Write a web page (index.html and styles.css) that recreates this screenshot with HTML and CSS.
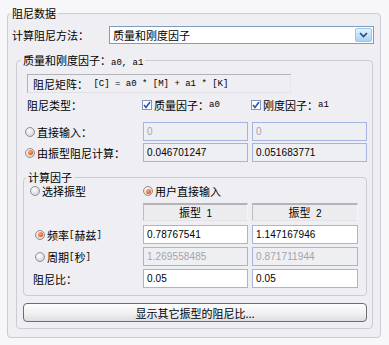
FILE: index.html
```html
<!DOCTYPE html>
<html>
<head>
<meta charset="utf-8">
<link rel="stylesheet" href="styles.css">
</head>
<body>
<fieldset class="grp outer">
  <legend>阻尼数据</legend>
  <div class="method-row">
    <span class="method-lbl">计算阻尼方法：</span>
    <div class="combo">
      <span class="combo-text">质量和刚度因子</span>
      <span class="combo-btn"><svg width="9" height="6" viewBox="0 0 9 6"><polyline points="1,1 4.5,4.5 8,1" fill="none" stroke="#29487a" stroke-width="1.6"/></svg></span>
    </div>
  </div>
  <fieldset class="grp inner">
    <legend>质量和刚度因子：<span class="mono">a0, a1</span></legend>
    <div class="formula">阻尼矩阵：<span class="mono">&nbsp;[C] = a0 * [M] + a1 * [K]</span></div>
    <div class="row3 chk-row">
      <span class="lbl">阻尼类型：</span>
      <span class="chk"><span class="box"><svg width="8" height="8" viewBox="0 0 8 8"><polyline points="1,4 3,6.5 7,1" fill="none" stroke="#2450b8" stroke-width="1.5"/></svg></span>质量因子：<span class="mono">a0</span></span>
      <span class="chk"><span class="box"><svg width="8" height="8" viewBox="0 0 8 8"><polyline points="1,4 3,6.5 7,1" fill="none" stroke="#2450b8" stroke-width="1.5"/></svg></span>刚度因子：<span class="mono">a1</span></span>
    </div>
    <div class="row3 in-row first">
      <span class="rlbl"><span class="rb"></span>直接输入：</span>
      <div class="inp dis">0</div>
      <div class="inp dis">0</div>
    </div>
    <div class="row3 in-row">
      <span class="rlbl"><span class="rb on"></span>由振型阻尼计算：</span>
      <div class="inp ro">0.046701247</div>
      <div class="inp ro">0.051683771</div>
    </div>
    <fieldset class="grp factor">
      <legend>计算因子</legend>
      <div class="rowf sel-row">
        <span class="rlbl"><span class="rb"></span>选择振型</span>
        <span class="rlbl span2"><span class="rb on"></span>用户直接输入</span>
      </div>
      <div class="rowf hdr-row">
        <span></span>
        <div class="hdr">振型<span class="num">&nbsp; 1</span></div>
        <div class="hdr">振型<span class="num">&nbsp; 2</span></div>
      </div>
      <div class="rowf frow">
        <span class="rlbl ind5"><span class="rb on"></span>频率<span class="mono">[</span>赫兹<span class="mono">]</span></span>
        <div class="inp">0.78767541</div>
        <div class="inp">1.147167946</div>
      </div>
      <div class="rowf frow">
        <span class="rlbl ind5"><span class="rb"></span>周期<span class="mono">[</span>秒<span class="mono">]</span></span>
        <div class="inp dis">1.269558485</div>
        <div class="inp dis">0.871711944</div>
      </div>
      <div class="rowf frow">
        <span class="lbl ind3">阻尼比：</span>
        <div class="inp">0.05</div>
        <div class="inp">0.05</div>
      </div>
    </fieldset>
    <button class="btn">显示其它振型的阻尼比...</button>
  </fieldset>
</fieldset>
</body>
</html>
```
FILE: styles.css
```css
* { box-sizing: border-box; }
html, body { margin: 0; padding: 0; }
body {
  width: 389px;
  height: 345px;
  overflow: hidden;
  background: #f7f7f9;
  font-family: "Noto Sans CJK SC", sans-serif;
  font-size: 11px;
  line-height: 14px;
  color: #000;
  text-spacing-trim: space-all;
}
.mono { font-family: "Liberation Mono", monospace; font-size: 9px; }
.num { font-family: "Liberation Sans", sans-serif; font-size: 10px; }

.grp {
  border: 1px solid #cbccd4;
  border-radius: 4px;
  min-width: 0;
  margin: 0;
}
.grp > legend {
  padding: 0 2px;
  height: 14px;
  line-height: 14px;
  white-space: nowrap;
}

.outer { margin: 6px 8px 0 7px; padding: 6px 6px 8px 4px; background: #efeff3; }
.outer > legend { margin-left: -2px; }

.method-row { display: flex; align-items: center; height: 18px; }
.method-lbl { width: 97px; flex: none; }
.combo {
  flex: 1;
  height: 18px;
  border: 1px solid #7f9db9;
  background: #fff;
  display: flex;
  align-items: center;
  padding-left: 3px;
}
.combo-btn {
  margin-left: auto;
  margin-right: 1px;
  width: 17px;
  height: 14px;
  border: 1px solid #9cc6ea;
  border-radius: 2px;
  background: linear-gradient(#e2f2fe, #a8d3f4);
  display: flex;
  align-items: center;
  justify-content: center;
}

.inner { margin: 9px 1px 0 4px; padding: 7px 5px 6px 10px; }
.inner > legend { margin-left: -6px; }

.formula {
  width: 264px;
  height: 19px;
  border: 1px solid;
  border-color: #b2b2ba #e6e6ec #e0e0e6 #b2b2ba;
  padding-left: 5px;
  display: flex;
  align-items: center;
}

.row3 {
  display: grid;
  grid-template-columns: 112px 105px 115px;
  column-gap: 4px;
  align-items: center;
}
.chk-row { height: 18px; margin-top: 3px; }
.in-row { height: 19px; margin-top: 2px; }
.in-row.first { margin-top: 8px; }

.chk { display: flex; align-items: center; margin-left: -1px; }
.box {
  width: 10px;
  height: 10px;
  border: 1px solid #8595b8;
  background: #fff;
  margin-right: 2px;
  display: flex;
  align-items: center;
  justify-content: center;
}

.rlbl { display: flex; align-items: center; margin-left: -2px; white-space: nowrap; }
.rb {
  width: 10px;
  height: 10px;
  border-radius: 50%;
  border: 1px solid #8e8e9a;
  background: radial-gradient(circle at 40% 35%, #ffffff, #d2d2da 80%);
  margin-right: 2px;
  flex: none;
  display: flex;
  align-items: center;
  justify-content: center;
}
.rb.on::after {
  content: "";
  width: 5px;
  height: 5px;
  border-radius: 50%;
  background: radial-gradient(circle at 40% 35%, #ffb070, #e84a10 80%);
}

.inp {
  height: 19px;
  border: 1px solid #a6b4e2;
  background: #fff;
  padding-left: 3px;
  display: flex;
  align-items: center;
  font-family: "Liberation Sans", sans-serif;
  font-size: 10px;
  letter-spacing: 0.1px;
  white-space: nowrap;
  overflow: hidden;
}
.inp.dis { background: #eeeff3; color: #a4a4a8; }
.inp.ro { background: #eeeff3; color: #000; }

.factor { margin: 8px 0 0 -4px; padding: 0 8px 7px 6px; }
.factor > legend { margin-left: -4px; }

.rowf {
  display: grid;
  grid-template-columns: 109px 105px 106px;
  column-gap: 4px;
  align-items: center;
}
.sel-row { height: 14px; }
.sel-row .rlbl { margin-left: 0; }
.span2 { grid-column: 2 / 4; }
.hdr-row { margin-top: 5px; }
.hdr {
  height: 18px;
  background: #ececee;
  border-top: 2px solid #b4b4b8;
  border-left: 1px solid #bcbcc0;
  border-right: 1px solid #f6f6f8;
  border-bottom: 1px solid #e4e4e8;
  text-align: center;
  line-height: 15px;
}
.frow { height: 19px; margin-top: 3px; }
.hdr-row + .frow { margin-top: 4px; }
.ind5 { margin-left: 5px; }
.ind3 { margin-left: 3px; }

.btn {
  display: flex;
  align-items: center;
  justify-content: center;
  width: 344px;
  height: 19px;
  margin: 7px 0 0 -4px;
  padding: 0;
  border: 1px solid #6c6c70;
  border-radius: 4px;
  background: linear-gradient(#fefefe, #f2f2f4 50%, #dedee2);
  font-family: "Noto Sans CJK SC", sans-serif;
  font-size: 11px;
  color: #000;
}
```
